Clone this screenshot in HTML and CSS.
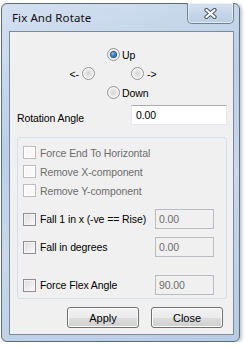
FILE: index.html
```html
<!DOCTYPE html>
<html lang="en">
<head>
    <meta charset="UTF-8">
    <title>Fix And Rotate</title>
    <link rel="stylesheet" href="styles.css">
</head>
<body>
    <div class="window">
        <div class="titlebar">
            <span class="title">Fix And Rotate</span>
            <span class="close-btn">
                <svg width="13" height="11" viewBox="0 0 13 11">
                    <path d="M2.5 2 L10.5 9 M10.5 2 L2.5 9" stroke="#46566b" stroke-width="4.2" stroke-linecap="round" fill="none"/>
                    <path d="M2.5 2 L10.5 9 M10.5 2 L2.5 9" stroke="#ffffff" stroke-width="2.2" stroke-linecap="round" fill="none"/>
                </svg>
            </span>
        </div>

        <div class="client">
            <div class="dir">
                <div class="dir-row center-row">
                    <span class="radio checked"></span>
                    <span>Up</span>
                </div>
                <div class="dir-row">
                    <span class="opt-left"><span>&lt;-</span><span class="radio"></span></span>
                    <span class="opt-right"><span class="radio"></span><span>-&gt;</span></span>
                </div>
                <div class="dir-row center-row">
                    <span class="radio"></span>
                    <span>Down</span>
                </div>
            </div>

            <div class="rot-row">
                <span class="rot-label">Rotation Angle</span>
                <div class="textbox">0.00</div>
            </div>

            <div class="group">
                <div class="chk-row disabled">
                    <span class="check"></span>
                    <span>Force End To Horizontal</span>
                </div>
                <div class="chk-row disabled">
                    <span class="check"></span>
                    <span>Remove X-component</span>
                </div>
                <div class="chk-row disabled">
                    <span class="check"></span>
                    <span>Remove Y-component</span>
                </div>

                <div class="val-row first">
                    <span class="chk-label"><span class="check"></span><span>Fall 1 in x (-ve == Rise)</span></span>
                    <div class="textbox small">0.00</div>
                </div>
                <div class="val-row second">
                    <span class="chk-label"><span class="check"></span><span>Fall in degrees</span></span>
                    <div class="textbox small">0.00</div>
                </div>
                <div class="val-row third">
                    <span class="chk-label"><span class="check"></span><span>Force Flex Angle</span></span>
                    <div class="textbox small">90.00</div>
                </div>
            </div>

            <div class="buttons">
                <button class="btn">Apply</button>
                <button class="btn">Close</button>
            </div>
        </div>
    </div>
</body>
</html>
```

FILE: styles.css
```css
body
{
    margin: 3px 0 0 1px;
    background-color: #ffffff;
    font-family: "Liberation Sans", Arial, sans-serif;
    font-size: 10.5px;
    letter-spacing: -0.1px;
    color: #000000;
}

.window
{
    width: 239px;
    height: 339px;
    box-sizing: border-box;
    border: 1px solid #5d6b7c;
    border-radius: 6px;
    padding: 0 5px 6px 7px;
    background: linear-gradient(160deg, #d3e0f0 0%, #bccfe6 35%, #c9d8ea 60%, #b7cbe3 100%);
    box-shadow: 1px 1px 4px rgba(0, 0, 0, 0.35);
}

.titlebar
{
    display: flex;
    height: 27px;
    align-items: flex-start;
}

.title
{
    padding: 7px 0 0 3px;
    font-family: "Noto Sans", "Liberation Sans", sans-serif;
    font-size: 11.5px;
    line-height: 14px;
    color: #111111;
    letter-spacing: 0.1px;
}

.close-btn
{
    margin: -1px 0 0 auto;
    width: 47px;
    height: 21px;
    box-sizing: border-box;
    border: 1px solid #6f8098;
    border-top: none;
    border-radius: 0 0 5px 5px;
    background: linear-gradient(#d9e4f2, #c6d6ea 50%, #bccde3);
    box-shadow: inset 0 0 0 1px rgba(255, 255, 255, 0.55);
    display: flex;
    align-items: center;
    justify-content: center;
}

.client
{
    width: 225px;
    height: 304px;
    box-sizing: border-box;
    border: 1px solid #7c8a9b;
    background-color: #f0f0f0;
    padding-top: 13px;
}

.dir-row
{
    display: flex;
    height: 19px;
    align-items: center;
}

.center-row
{
    padding-left: 97px;
    gap: 2px;
}

.opt-left
{
    width: 85px;
    display: flex;
    justify-content: flex-end;
    align-items: center;
    gap: 3px;
}

.opt-right
{
    margin-left: 36px;
    display: flex;
    align-items: center;
    gap: 3px;
}

.radio
{
    width: 13px;
    height: 13px;
    box-sizing: border-box;
    border-radius: 50%;
    border: 1px solid #929292;
    background: radial-gradient(circle at 50% 50%, #d4d4d4 0%, #e8e8e8 45%, #f8f8f8 80%);
    box-shadow: inset 0 0 0 1px #f6f6f6;
    display: flex;
    align-items: center;
    justify-content: center;
}

.radio.checked::after
{
    content: "";
    width: 5px;
    height: 5px;
    border-radius: 50%;
    background: radial-gradient(circle at 40% 35%, #8fd0f5 0%, #2f80c6 45%, #0d3f75 100%);
    box-shadow: 0 0 0 1px #25527f;
}

.rot-row
{
    display: flex;
    align-items: flex-start;
    margin-top: 3px;
    padding: 0 6px 0 7px;
}

.rot-label
{
    padding-top: 7px;
    line-height: 13px;
}

.textbox
{
    margin-left: auto;
    width: 96px;
    height: 20px;
    box-sizing: border-box;
    border: 1px solid #e3e9ef;
    border-top-color: #abadb3;
    background-color: #ffffff;
    padding: 3px 0 0 4px;
    line-height: 13px;
}

.textbox.small
{
    width: 59px;
    border: 1px solid #b9bcc0;
    background-color: #f0f0f0;
    color: #6d6d6d;
    padding-left: 3px;
}

.group
{
    margin: 12px 0 0 7px;
    width: 210px;
    height: 162px;
    box-sizing: border-box;
    border: 1px solid #d5dfe5;
    border-radius: 3px;
    padding: 5px 12px 2px 5px;
}

.chk-row
{
    display: flex;
    height: 19px;
    align-items: center;
    gap: 4px;
}

.chk-row.disabled
{
    color: #6d6d6d;
}

.check
{
    width: 13px;
    height: 13px;
    box-sizing: border-box;
    border: 1px solid #8e8f8f;
    background: linear-gradient(135deg, #dcdcdc, #fbfbfb);
    box-shadow: inset 0 0 0 1px #f4f4f4;
}

.disabled .check
{
    border-color: #bcbcbc;
    background: #f9f9f9;
    box-shadow: inset 0 0 0 1px #ffffff;
}

.val-row
{
    display: flex;
    height: 20px;
    align-items: center;
}

.val-row.first
{
    margin-top: 9px;
}

.val-row.second
{
    margin-top: 8px;
}

.val-row.third
{
    margin-top: 18px;
}

.chk-label
{
    display: flex;
    align-items: center;
    gap: 4px;
}

.buttons
{
    display: flex;
    justify-content: flex-end;
    gap: 12px;
    margin-top: 8px;
    padding-right: 10px;
}

.btn
{
    width: 72px;
    height: 21px;
    border: 1px solid #707070;
    border-radius: 3px;
    background: linear-gradient(#f2f2f2 0%, #ebebeb 50%, #dddddd 51%, #cfcfcf 100%);
    box-shadow: inset 0 0 0 1px #fbfbfb;
    font-family: "Liberation Sans", Arial, sans-serif;
    font-size: 11px;
    color: #000000;
    padding: 0;
}
```
